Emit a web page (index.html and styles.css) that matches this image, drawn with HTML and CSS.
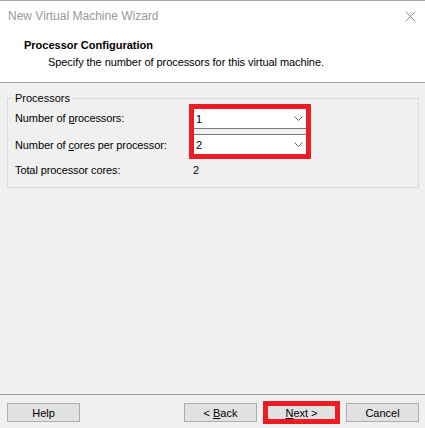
FILE: index.html
```html
<!DOCTYPE html>
<html lang="en">
<head>
<meta charset="UTF-8" />
<title>New Virtual Machine Wizard</title>
<link rel="stylesheet" href="styles.css">
</head>
<body>

<div class="window">
  <div class="titlebar">
    <span class="title">New Virtual Machine Wizard</span>
    <svg class="close" width="11" height="11" viewBox="0 0 11 11">
      <path d="M0.5 0.5 L10.5 10.5 M10.5 0.5 L0.5 10.5" stroke="#8c8c8c" stroke-width="1" fill="none" />
    </svg>
  </div>

  <div class="header">
    <div class="heading">Processor Configuration</div>
    <div class="subheading">Specify the number of processors for this virtual machine.</div>
  </div>

  <main class="content">
    <fieldset class="group">
      <legend>Processors</legend>
      <div class="proc-grid">
        <label class="row-1">Number of <u>p</u>rocessors:</label>
        <div class="combo-box">
          <div class="combo">
            <span>1</span>
            <svg width="9" height="5" viewBox="0 0 9 5"><path d="M0.5 0.5 L4.5 4.5 L8.5 0.5" stroke="#606060" fill="none" /></svg>
          </div>
          <div class="combo">
            <span>2</span>
            <svg width="9" height="5" viewBox="0 0 9 5"><path d="M0.5 0.5 L4.5 4.5 L8.5 0.5" stroke="#606060" fill="none" /></svg>
          </div>
        </div>
        <label class="row-2">Number of <u>c</u>ores per processor:</label>
        <span class="row-3">Total processor cores:</span>
        <span class="row-3 total">2</span>
      </div>
    </fieldset>
  </main>

  <footer class="buttons">
    <button class="help">Help</button>
    <button>&lt; <u>B</u>ack</button>
    <button class="marked"><u>N</u>ext &gt;</button>
    <button>Cancel</button>
  </footer>
</div>

</body>
</html>
```

FILE: styles.css
```css
* {
  box-sizing: border-box;
}
body {
  margin: 0;
  font-family: 'Liberation Sans', Arial, sans-serif;
  font-size: 11px;
  color: #000;
}
.window {
  width: 425px;
  height: 428px;
  display: flex;
  flex-direction: column;
  background: #f0f0f0;
  border-top: 1px solid #aaaaaa;
}

/* title bar (inactive window) */
.titlebar {
  height: 30px;
  background: #fff;
  display: flex;
  align-items: center;
  justify-content: space-between;
  padding: 0 9px 0 8px;
}
.title {
  font-size: 12px;
  color: #999;
}
.close {
  margin-top: 1px;
}

/* white wizard header */
.header {
  background: #fff;
  height: 52px;
  padding: 7px 0 0 24px;
  border-bottom: 1px solid #a0a0a0;
}
.heading {
  font-weight: bold;
  line-height: 14px;
}
.subheading {
  margin: 3px 0 0 24px;
  line-height: 14px;
  letter-spacing: -0.07px;
}

/* group box */
.content {
  flex: 1;
  padding: 9px 6px 0 7px;
}
.group {
  margin: 0;
  padding: 0 6px 10px 6px;
  border: 1px solid #dcdcdc;
  min-width: 0;
}
.group legend {
  padding: 0 2px 0 1px;
  line-height: 12px;
}
.proc-grid {
  margin-left: 1px;
  display: grid;
  grid-template-columns: 174px 122px;
  grid-template-rows: 27px 28px auto;
  letter-spacing: -0.1px;
}
.proc-grid label {
  align-self: center;
}
.row-1 { grid-row: 1; grid-column: 1; }
.row-2 { grid-row: 2; grid-column: 1; }
.row-3 {
  grid-row: 3;
  padding-top: 5px;
  line-height: 13px;
}
.total {
  grid-column: 2;
  padding-left: 4px;
}
.combo-box {
  grid-row: 1 / 3;
  grid-column: 2;
  border: 5px solid #ed1c24;
  display: flex;
  flex-direction: column;
  gap: 5px;
}
.combo {
  height: 20px;
  background: #fff;
  display: flex;
  align-items: center;
  justify-content: space-between;
  padding: 0 3px 0 2px;
}
.combo:first-child {
  border-bottom: 1px solid #7a7a7a;
}
.combo:last-child {
  border-top: 1px solid #7a7a7a;
}

/* bottom buttons */
.buttons {
  border-top: 1px solid #a0a0a0;
  height: 34px;
  padding: 8px 6px 0 7px;
  display: flex;
  gap: 8px;
}
button {
  width: 73px;
  height: 19px;
  padding: 0;
  background: #e1e1e1;
  border: 1px solid #adadad;
  font-family: inherit;
  font-size: 11px;
  color: #000;
}
.help {
  margin-right: auto;
}
.marked {
  outline: 5px solid #ed1c24;
  outline-offset: -3px;
}
```
